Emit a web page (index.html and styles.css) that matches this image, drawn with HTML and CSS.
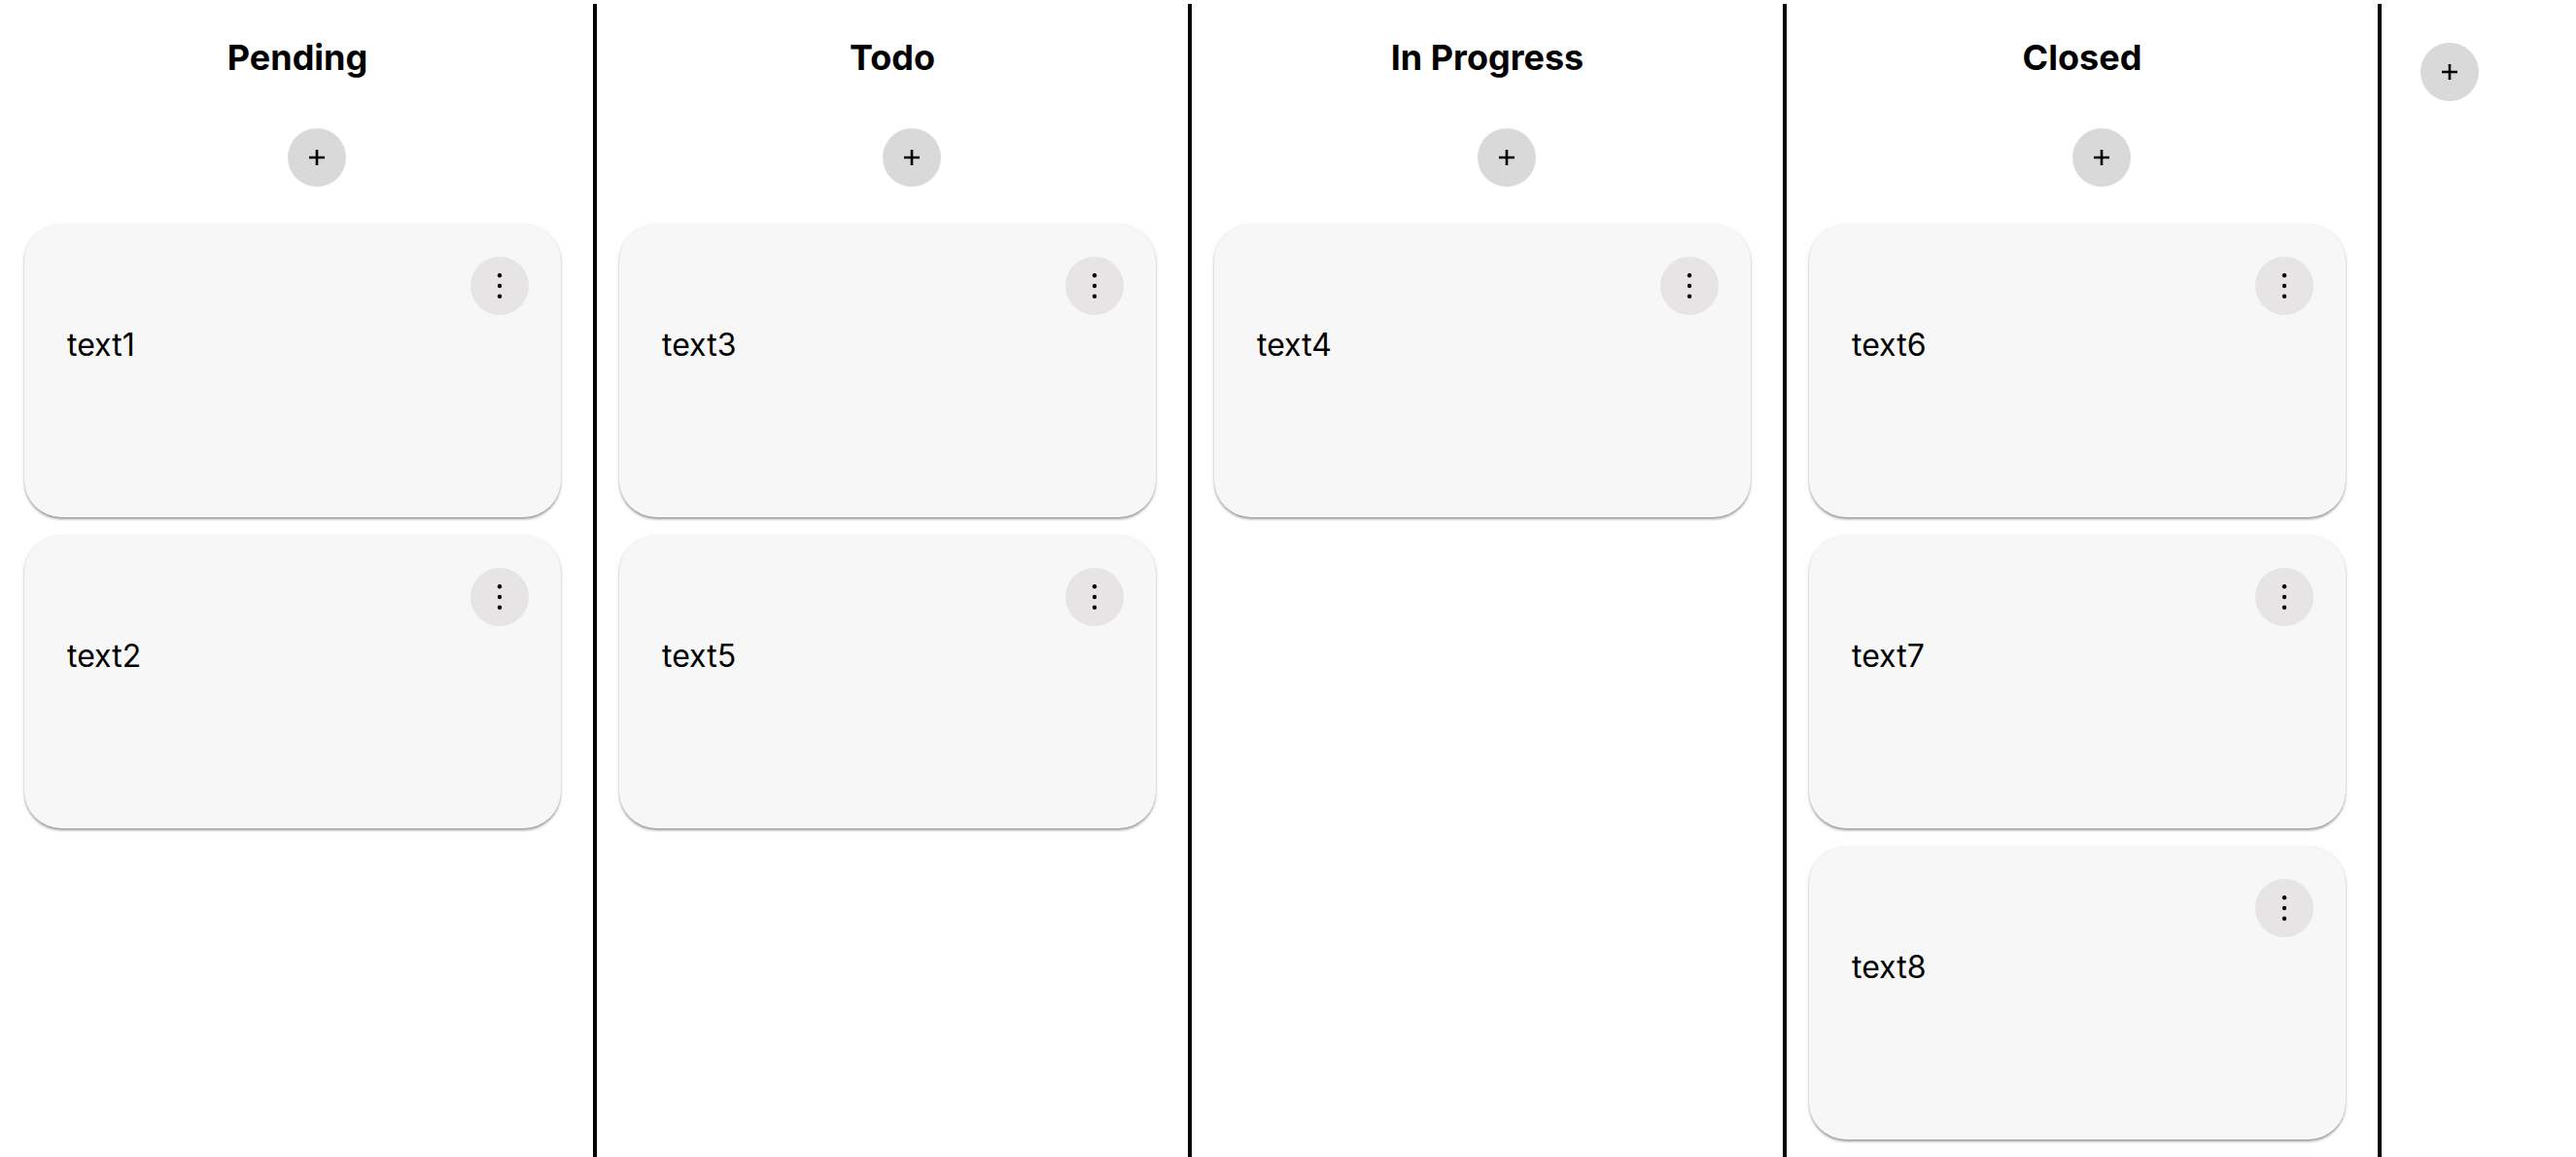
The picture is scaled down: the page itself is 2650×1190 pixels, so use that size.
FILE: index.html
```html
<!DOCTYPE html>
<html lang="en">
<head>
<meta charset="utf-8">
<title>Board</title>
<link rel="stylesheet" href="styles.css">
</head>
<body>
<main class="board">
  <section class="column">
    <h2 class="col-title">Pending</h2>
    <div class="add-row"><button class="add-btn" aria-label="Add"><svg width="16" height="16" viewBox="0 0 16 16"><path d="M8 0v16M0 8h16" stroke="#000" stroke-width="2.6"/></svg></button></div>
    <div class="cards">
      <article class="card"><div class="card-top"><button class="menu-btn" aria-label="More"><svg width="6" height="28" viewBox="0 0 6 28"><circle cx="3" cy="3.3" r="2.2"/><circle cx="3" cy="14" r="2.2"/><circle cx="3" cy="24.7" r="2.2"/></svg></button></div><p class="card-text">text1</p></article>
      <article class="card"><div class="card-top"><button class="menu-btn" aria-label="More"><svg width="6" height="28" viewBox="0 0 6 28"><circle cx="3" cy="3.3" r="2.2"/><circle cx="3" cy="14" r="2.2"/><circle cx="3" cy="24.7" r="2.2"/></svg></button></div><p class="card-text">text2</p></article>
    </div>
  </section>
  <section class="column">
    <h2 class="col-title">Todo</h2>
    <div class="add-row"><button class="add-btn" aria-label="Add"><svg width="16" height="16" viewBox="0 0 16 16"><path d="M8 0v16M0 8h16" stroke="#000" stroke-width="2.6"/></svg></button></div>
    <div class="cards">
      <article class="card"><div class="card-top"><button class="menu-btn" aria-label="More"><svg width="6" height="28" viewBox="0 0 6 28"><circle cx="3" cy="3.3" r="2.2"/><circle cx="3" cy="14" r="2.2"/><circle cx="3" cy="24.7" r="2.2"/></svg></button></div><p class="card-text">text3</p></article>
      <article class="card"><div class="card-top"><button class="menu-btn" aria-label="More"><svg width="6" height="28" viewBox="0 0 6 28"><circle cx="3" cy="3.3" r="2.2"/><circle cx="3" cy="14" r="2.2"/><circle cx="3" cy="24.7" r="2.2"/></svg></button></div><p class="card-text">text5</p></article>
    </div>
  </section>
  <section class="column">
    <h2 class="col-title">In Progress</h2>
    <div class="add-row"><button class="add-btn" aria-label="Add"><svg width="16" height="16" viewBox="0 0 16 16"><path d="M8 0v16M0 8h16" stroke="#000" stroke-width="2.6"/></svg></button></div>
    <div class="cards">
      <article class="card"><div class="card-top"><button class="menu-btn" aria-label="More"><svg width="6" height="28" viewBox="0 0 6 28"><circle cx="3" cy="3.3" r="2.2"/><circle cx="3" cy="14" r="2.2"/><circle cx="3" cy="24.7" r="2.2"/></svg></button></div><p class="card-text">text4</p></article>
    </div>
  </section>
  <section class="column">
    <h2 class="col-title">Closed</h2>
    <div class="add-row"><button class="add-btn" aria-label="Add"><svg width="16" height="16" viewBox="0 0 16 16"><path d="M8 0v16M0 8h16" stroke="#000" stroke-width="2.6"/></svg></button></div>
    <div class="cards">
      <article class="card"><div class="card-top"><button class="menu-btn" aria-label="More"><svg width="6" height="28" viewBox="0 0 6 28"><circle cx="3" cy="3.3" r="2.2"/><circle cx="3" cy="14" r="2.2"/><circle cx="3" cy="24.7" r="2.2"/></svg></button></div><p class="card-text">text6</p></article>
      <article class="card"><div class="card-top"><button class="menu-btn" aria-label="More"><svg width="6" height="28" viewBox="0 0 6 28"><circle cx="3" cy="3.3" r="2.2"/><circle cx="3" cy="14" r="2.2"/><circle cx="3" cy="24.7" r="2.2"/></svg></button></div><p class="card-text">text7</p></article>
      <article class="card"><div class="card-top"><button class="menu-btn" aria-label="More"><svg width="6" height="28" viewBox="0 0 6 28"><circle cx="3" cy="3.3" r="2.2"/><circle cx="3" cy="14" r="2.2"/><circle cx="3" cy="24.7" r="2.2"/></svg></button></div><p class="card-text">text8</p></article>
      <article class="card"></article>
    </div>
  </section>
  <section class="column column-new">
    <div class="add-row add-row-new"><button class="add-btn" aria-label="Add column"><svg width="16" height="16" viewBox="0 0 16 16"><path d="M8 0v16M0 8h16" stroke="#000" stroke-width="2.6"/></svg></button></div>
  </section>
</main>
</body>
</html>
```

FILE: styles.css
```css
html, body {
  margin: 0;
  padding: 0;
  background: #ffffff;
  overflow: hidden;
}

body {
  font-family: Inter, "Noto Sans", "Liberation Sans", sans-serif;
  color: #000;
}

.board {
  display: flex;
  align-items: stretch;
  height: 100vh;
  box-sizing: border-box;
  padding: 4px 0 0 2px;
  overflow: hidden;
}

.column {
  width: 608px;
  flex: 0 0 608px;
  border-right: 4px solid #000;
  display: flex;
  flex-direction: column;
}

.column-new {
  flex: 1 1 auto;
  border-right: none;
}

.col-title {
  margin: 34px 0 0 0;
  font-size: 36px;
  line-height: 42px;
  font-weight: 700;
  text-align: center;
}

.add-row {
  display: flex;
  justify-content: center;
  padding-left: 40px;
  margin-top: 52px;
}

.add-row-new {
  justify-content: flex-start;
  margin-top: 40px;
}

.add-btn {
  width: 60px;
  height: 60px;
  border-radius: 50%;
  border: none;
  padding: 0;
  background: #d9d9d9;
  display: flex;
  align-items: center;
  justify-content: center;
  cursor: pointer;
}

.add-btn svg {
  display: block;
}

.cards {
  display: flex;
  flex-direction: column;
  gap: 19px;
  margin-top: 39px;
  padding-left: 23px;
}

.card {
  width: 552px;
  height: 301px;
  flex: 0 0 301px;
  box-sizing: border-box;
  background: #f7f7f7;
  border-radius: 38px;
  padding: 33px 33px 0 44px;
  box-shadow: 0 3px 3px -1px rgba(0, 0, 0, 0.28), 0 1px 2px 0 rgba(0, 0, 0, 0.14), 0 1px 4px 0 rgba(0, 0, 0, 0.12);
  display: flex;
  flex-direction: column;
}

.card-top {
  display: flex;
  justify-content: flex-end;
}

.menu-btn {
  width: 60px;
  height: 60px;
  border-radius: 50%;
  border: none;
  padding: 0;
  background: #e6e4e5;
  display: flex;
  align-items: center;
  justify-content: center;
  cursor: pointer;
}

.menu-btn svg {
  display: block;
  fill: #000;
}

.card-text {
  margin: 13px 0 0 0;
  font-size: 32px;
  line-height: 36px;
  font-weight: 400;
}
```
